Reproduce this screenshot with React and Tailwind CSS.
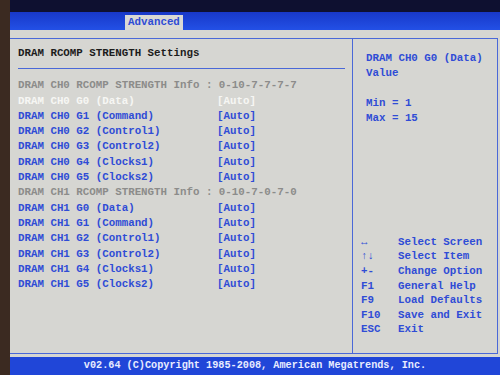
const rows0 = [
  ["DRAM CH0 G0 (Data)", true],
  ["DRAM CH0 G1 (Command)"],
  ["DRAM CH0 G2 (Control1)"],
  ["DRAM CH0 G3 (Control2)"],
  ["DRAM CH0 G4 (Clocks1)"],
  ["DRAM CH0 G5 (Clocks2)"],
];

const rows1 = [
  ["DRAM CH1 G0 (Data)"],
  ["DRAM CH1 G1 (Command)"],
  ["DRAM CH1 G2 (Control1)"],
  ["DRAM CH1 G3 (Control2)"],
  ["DRAM CH1 G4 (Clocks1)"],
  ["DRAM CH1 G5 (Clocks2)"],
];

const help = [
  ["\u2194", "Select Screen"],
  ["\u2191\u2193", "Select Item"],
  ["+-", "Change Option"],
  ["F1", "General Help"],
  ["F9", "Load Defaults"],
  ["F10", "Save and Exit"],
  ["ESC", "Exit"],
];

function Row({ label, selected }) {
  return (
    <div className={"flex " + (selected ? "text-[#f6f6f4]" : "text-[#2f4cd6]")}>
      <span className="w-[199px] shrink-0">{label}</span>
      <span>[Auto]</span>
    </div>
  );
}

function App() {
  return (
    <div
      className="w-[500px] h-[375px] flex overflow-hidden bg-[#3a2820] text-[10.8px] font-bold"
      style={{ fontFamily: '"Liberation Mono", "DejaVu Sans Mono", monospace' }}
    >
      <div className="w-[10px] shrink-0 bg-[#3b2a21]" />
      <div className="flex-1 flex flex-col">
        <div className="h-[12px] bg-[#0e1030]" />
        <div className="h-[18px] bg-gradient-to-b from-[#1838c8] to-[#2350e6] flex items-end">
          <div className="ml-[115px] px-[3px] h-[15px] leading-[15px] bg-[#d9d9d5] text-[#2f4cd6]">
            Advanced
          </div>
        </div>
        <div className="flex-1 bg-[#d6d6d2] flex flex-col pt-[8px] pb-[3px] pr-[2px]">
          <div className="flex-1 flex border-t border-r border-b border-[#4a68d8]">
            {/* left panel */}
            <div className="w-[342px] shrink-0 pl-[8px] leading-[15.3px]">
              <div className="pt-[7px] pb-[7px] text-[#1c1c1c]">DRAM RCOMP STRENGTH Settings</div>
              <div className="h-px bg-[#4a68d8] w-[327px]" />
              <div className="pt-[9px]">
                <div className="text-[#8c8c8a]">DRAM CH0 RCOMP STRENGTH Info : 0-10-7-7-7-7</div>
                {rows0.map(([l, s]) => (
                  <Row key={l} label={l} selected={s} />
                ))}
                <div className="text-[#8c8c8a]">DRAM CH1 RCOMP STRENGTH Info : 0-10-7-0-7-0</div>
                {rows1.map(([l]) => (
                  <Row key={l} label={l} />
                ))}
              </div>
            </div>
            {/* right panel */}
            <div className="flex-1 border-l border-[#4a68d8] flex flex-col text-[#2f4cd6] leading-[15px]">
              <div className="pl-[13px] pt-[12px]">
                <div>DRAM CH0 G0 (Data)</div>
                <div>Value</div>
                <div className="h-[15px]" />
                <div>Min = 1</div>
                <div>Max = 15</div>
              </div>
              <div className="mt-auto mb-[16px] pl-[8px] leading-[14.6px]">
                {help.map(([k, d]) => (
                  <div key={k} className="flex">
                    <span className="w-[37px] shrink-0">{k}</span>
                    <span>{d}</span>
                  </div>
                ))}
              </div>
            </div>
          </div>
        </div>
        <div className="h-[18px] bg-[#2046d8] text-[#e8ecff] text-[10.2px] flex items-center justify-center">
          v02.64 (C)Copyright 1985-2008, American Megatrends, Inc.
        </div>
      </div>
    </div>
  );
}

export default App;
